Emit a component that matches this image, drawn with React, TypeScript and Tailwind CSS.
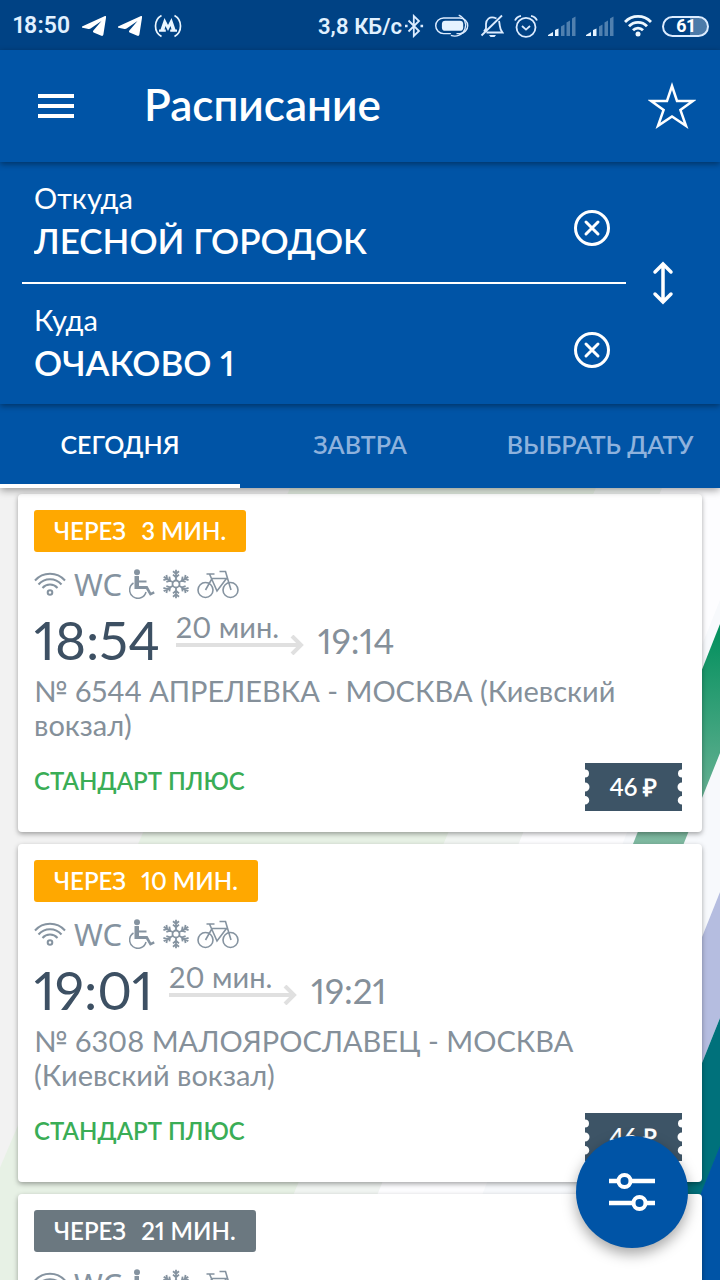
import React from "react";

type Trip = {
  eta: string;
  soon: boolean;
  depart: string;
  arrive: string;
  duration: string;
  route: string;
  fare: string;
  price: string;
};

const trips: Trip[] = [
  { eta: "3 МИН.", soon: true, depart: "18:54", arrive: "19:14", duration: "20 мин.", route: "№ 6544 АПРЕЛЕВКА - МОСКВА (Киевский вокзал)", fare: "СТАНДАРТ ПЛЮС", price: "46 ₽" },
  { eta: "10 МИН.", soon: true, depart: "19:01", arrive: "19:21", duration: "20 мин.", route: "№ 6308 МАЛОЯРОСЛАВЕЦ - МОСКВА (Киевский вокзал)", fare: "СТАНДАРТ ПЛЮС", price: "46 ₽" },
  { eta: "21 МИН.", soon: false, depart: "19:12", arrive: "19:32", duration: "20 мин.", route: "№ 6546 АПРЕЛЕВКА - МОСКВА (Киевский вокзал)", fare: "СТАНДАРТ ПЛЮС", price: "46 ₽" },
];

function Telegram() {
  return (
    <svg className="h-6 w-6" viewBox="0 0 24 24" fill="#fff">
      <path d="M0 12.500 L23 2 Q24.300 1.600 24.100 3 L21.400 20.500 Q21 22.600 18.800 21.600 L11.600 18.400 Q10.500 17.600 11.400 16.500 L19.500 7 L8.600 14.600 Q7.600 15.300 6.500 15 L0.600 13.800 Q-.6 13.300 0 12.500Z" />
    </svg>
  );
}

function Metro() {
  return (
    <svg className="h-6 w-7" viewBox="0 0 28 24" fill="none" stroke="#eaf6ff" strokeWidth="1.7">
      <path d="M7.500 1.500C-.5 6 -.5 18 7.500 22.500M20.500 1.500c8 4.500 8 16.500 0 21" />
      <path d="M10.500 4 L14 11 L17.500 4 L21.500 15.600 H23 V17.800 H16.200 V15.600 H17.500 L16.500 12 L14 17 L11.500 12 L10.500 15.600 H11.800 V17.800 H5 V15.600 H6.500Z" fill="#eaf6ff" stroke="none" />
    </svg>
  );
}

function Bluetooth() {
  return (
    <svg className="h-6 w-5" viewBox="0 0 20 24" fill="none" stroke="#dcecff" strokeWidth="1.8">
      <path d="M4.500 6.500 L15 17 L9.800 22 V2 L15 7 L4.500 17.500" />
      <path d="M1 12h2.600M16.500 12h2.600" strokeWidth="2.600" />
    </svg>
  );
}

function BatterySaver() {
  return (
    <svg className="h-6 w-9" viewBox="2 1 32 21.400" fill="none" stroke="#dcecff" strokeWidth="1.300">
      <path d="M17 18.500H10.500a7 7 0 0 1 0-14h14.500a7 7 0 0 1 0 14h-3" />
      <path d="M24 2a9.500 9.500 0 1 1-7 18" strokeWidth="1.200" />
      <rect x="9" y="7" width="19" height="9" rx="3" fill="#e6f3ff" stroke="none" />
    </svg>
  );
}

function BellOff() {
  return (
    <svg className="h-6 w-6" viewBox="0 0 24 24" fill="none" stroke="#dcecff" strokeWidth="1.800">
      <path d="M16.500 4.500C9 1 6 6.500 6 10v4.500L4 17.500M19 7c1.500 6 0 7 3.500 11.500H6.500M22 1.500 L1.500 21.500" />
      <path d="M9 21h7l-1.500 2h-4z" fill="#dcecff" stroke="none" />
    </svg>
  );
}

function Alarm() {
  return (
    <svg className="h-6 w-6" viewBox="0 0 24 24" fill="none" stroke="#dcecff" strokeWidth="1.800">
      <circle cx="12" cy="13.300" r="9.500" />
      <path d="M8 12l4 3.600 4-3.600M1 6.500C2 4 4.500 2.300 7 1.800M23 6.500C22 4 19.500 2.300 17 1.800" />
    </svg>
  );
}

function Signal() {
  return (
    <svg className="h-5 w-7" viewBox="0 0 28 20" fill="#e6f3ff">
      <path d="M0 20v-1l5-3v4zM7 14l3.500-1.500V20H7z" />
      <path d="M13 10.500l3.500-2V20H13zM18.500 6.500l3.500-2V20h-3.500zM24 2.500L27.500.5V20H24z" opacity=".35" />
    </svg>
  );
}

function StatusWifi() {
  return (
    <svg className="h-6 w-7" viewBox="0 0 28 24" fill="none" stroke="#eef8ff" strokeWidth="2.800">
      <path d="M1 8a18 18 0 0 1 26 0M5 12.200a12.500 12.500 0 0 1 18 0M9 16.200a7 7 0 0 1 10 0" />
      <circle cx="14" cy="20" r="2.500" fill="#eef8ff" stroke="none" />
    </svg>
  );
}

function StatusBar() {
  return (
    <div className="flex h-[50px] shrink-0 items-center justify-between bg-[#004284] pt-[2px] pr-[11px] pl-[13px] font-['Roboto',sans-serif] text-[#e1f1ff]">
      <div className="flex items-center gap-3 text-[23px] font-semibold">
        <span>18:50</span>
        <Telegram />
        <Telegram />
        <Metro />
      </div>
      <div className="flex items-center gap-[10px] text-[22px] font-semibold">
        <span className="-mr-2">3,8 КБ/с</span>
        <Bluetooth />
        <BatterySaver />
        <BellOff />
        <Alarm />
        <Signal />
        <Signal />
        <StatusWifi />
        <span className="flex h-[21px] w-[47px] items-center justify-center rounded-full border-2 border-[#dcecff] bg-linear-to-r from-transparent from-60% to-white/30 to-60% text-lg leading-none font-bold text-white">
          61
        </span>
      </div>
    </div>
  );
}

function ClearIcon() {
  return (
    <svg className="h-9 w-9" viewBox="0 0 36 36" fill="none" stroke="#fff" strokeWidth="3" strokeLinecap="round">
      <circle cx="18" cy="18" r="16.500" />
      <path d="M12 12l12 12M24 12L12 24" />
    </svg>
  );
}

function Station({ id, label, value }: { id: string; label: string; value: string }) {
  return (
    <div className="flex h-[120px] items-center pr-4 pl-3">
      <div className="min-w-0 flex-1 pt-1">
        <label htmlFor={id} className="block text-[29px] leading-8">{label}</label>
        <input id={id} defaultValue={value} className="block h-[52px] w-full bg-transparent text-[35px] font-semibold outline-none" />
      </div>
      <button type="button" aria-label="Очистить" className="pt-3">
        <ClearIcon />
      </button>
    </div>
  );
}

function Amenities() {
  return (
    <div className="mt-[14px] flex h-[36px] items-center text-[#8593a0]">
      <svg className="h-7 w-8" viewBox="0 0 32 28" fill="none" stroke="currentColor" strokeWidth="2">
        <path d="M1 10.500a20 20 0 0 1 30 0M4.500 14.500a15 15 0 0 1 23 0M8.500 18a10 10 0 0 1 15 0" />
        <circle cx="16" cy="22.500" r="2.300" />
      </svg>
      <span className="ml-2 w-[47px] font-['Noto_Sans',sans-serif] text-[31px]">WC</span>
      <svg className="ml-2 h-[30px] w-[26px]" viewBox="0 0 26 30" fill="none" stroke="currentColor">
        <circle cx="8" cy="3.300" r="3" fill="currentColor" stroke="none" />
        <path d="M5.500 7H10V11.500H17.500V13.500H10V17H18.500L22 23.500 24.800 22.200 25.700 24.500 21 26.800 17 20H5.500Z" fill="currentColor" stroke="none" />
        <path d="M4.500 14a8.300 8.300 0 1 0 12.500 9" strokeWidth="1.500" />
      </svg>
      <svg className="ml-2 h-[30px] w-[26px]" viewBox="0 0 26 30" fill="none" stroke="currentColor" strokeWidth="1.800">
        <circle cx="13" cy="15" r="3.500" />
        {[0, 60, 120, 180, 240, 300].map((angle) => (
          <path key={angle} transform={`rotate(${angle} 13 15)`} d="M13 11.500V.8M10 2.200L13 4.800l3-2.600M10 5.600L13 8.200 16 5.600" />
        ))}
      </svg>
      <svg className="ml-2 h-[30px] w-[42px]" viewBox="0 0 42 30" fill="none" stroke="currentColor" strokeWidth="1.600">
        <circle cx="8.500" cy="21" r="7.500" />
        <circle cx="33.500" cy="21" r="7.500" />
        <path d="M8.500 21L15 9.500h14.500L20 22 12.500 5M9.500 5h8M22.500 2.500h6L34 21" />
      </svg>
    </div>
  );
}

function Ticket({ price }: { price: string }) {
  return (
    <button type="button" className="relative h-12 w-[97px] text-2xl font-semibold text-white">
      <svg className="absolute inset-0 h-full w-full" viewBox="0 0 97 48" fill="#3d5466">
        <path d="M0 0H97V6.500A4 4 0 0 0 97 14.500V19.500A4 4 0 0 0 97 28.500V33A4 4 0 0 0 97 41.500V48H0V41.500A4 4 0 0 0 0 33V28.500A4 4 0 0 0 0 19.500V14.500A4 4 0 0 0 0 6.500Z" />
      </svg>
      <span className="relative">{price}</span>
    </button>
  );
}

function TripCard({ trip }: { trip: Trip }) {
  return (
    <article className="rounded-[4px] bg-white px-4 pt-4 pb-[21px] shadow-[0_2px_5px_rgba(0,0,0,0.35)]">
      <span className={`inline-flex h-[42px] items-center gap-[15px] rounded-[3px] px-5 align-top text-2xl font-semibold text-white ${trip.soon ? "bg-[#ffa800]" : "bg-[#6b7880]"}`}>
        <span>ЧЕРЕЗ</span>
        <span>{trip.eta}</span>
      </span>
      <Amenities />
      <div className="mt-2 flex h-[60px] items-center">
        <time className="text-[53px] leading-[60px] text-[#3d5063]">{trip.depart}</time>
        <div className="ml-4 flex w-[128px] flex-col pb-3">
          <span className="text-[29px] leading-7 text-[#85909a]">{trip.duration}</span>
          <svg className="-mt-[6px] h-5 w-32" viewBox="0 0 128 20" fill="none" stroke="#e0e0e0" strokeWidth="4">
            <path d="M0 10h125M116 1l9 9-9 9" />
          </svg>
        </div>
        <time className="ml-[14px] text-[35px] text-[#85909a]">{trip.arrive}</time>
      </div>
      <p className="mt-1 text-[29px] leading-[34px] text-[#85909a]">{trip.route}</p>
      <div className="mt-[21px] flex items-start justify-between pr-1">
        <span className="text-2xl leading-9 font-semibold text-[#3aad56]">{trip.fare}</span>
        <Ticket price={trip.price} />
      </div>
    </article>
  );
}

function Backdrop() {
  return (
    <svg className="absolute inset-0 h-full w-full" viewBox="0 0 720 792" preserveAspectRatio="xMaxYMin slice">
      <defs>
        <linearGradient id="green" x1="0" y1="0" x2="0" y2="1">
          <stop offset="0" stopColor="#008f5c" />
          <stop offset=".6" stopColor="#7db89f" />
          <stop offset="1" stopColor="#a8d4c2" />
        </linearGradient>
      </defs>
      <path fill="#f2f2f2" d="M0 0H720V792H0z" />
      <path fill="#e7f1e5" d="M290 0H596L257 792H-48z" />
      <path fill="#f1f5f2" d="M596 0H662L343 792H257z" />
      <path fill="#fdfdff" d="M662 0H720V792H343z" />
      <path fill="#f7f9fc" d="M720 112V404L565 792H448z" />
      <path fill="url(#green)" d="M720 136V265L630 490H580z" />
      <path fill="#b5bde0" d="M720 404V530L615 792H565z" />
      <path fill="#00717b" d="M720 530V660L667 792H615z" />
      <path fill="#0054a6" d="M720 658V792H666z" />
    </svg>
  );
}

const tabs = ["СЕГОДНЯ", "ЗАВТРА", "ВЫБРАТЬ ДАТУ"];

export default function App() {
  return (
    <div className="flex h-screen flex-col overflow-hidden bg-[#f2f2f2] font-['Lato',sans-serif] proportional-nums">
      <StatusBar />
      <header className="z-30 flex h-28 shrink-0 items-center bg-[#0054a6] pr-6 pl-[38px] text-white shadow-[0_2px_6px_rgba(0,0,0,0.4)]">
        <button type="button" aria-label="Меню" className="flex w-9 flex-col gap-[6px]">
          <span className="h-1 bg-white" />
          <span className="h-1 bg-white" />
          <span className="h-1 bg-white" />
        </button>
        <h1 className="ml-[70px] flex-1 pb-1 text-[44px] font-semibold">Расписание</h1>
        <button type="button" aria-label="В избранное">
          <svg className="h-12 w-12" viewBox="0 0 48 48" fill="none" stroke="#fff" strokeWidth="2.500">
            <path d="M24 4L29 19H44.800L32.400 28 38 43.800 24 34.400 10 43.800 15.600 28 3.200 19H19Z" />
          </svg>
        </button>
      </header>
      <section className="z-20 flex shrink-0 items-center bg-[#0054a6] pl-[22px] text-white shadow-[0_2px_6px_rgba(0,0,0,0.4)]">
        <div className="flex-1">
          <Station id="from" label="Откуда" value="ЛЕСНОЙ ГОРОДОК" />
          <hr className="border-t-2 border-white" />
          <Station id="to" label="Куда" value="ОЧАКОВО 1" />
        </div>
        <button type="button" aria-label="Поменять местами" className="flex w-[94px] justify-center pr-5">
          <svg className="h-11 w-6" viewBox="0 0 24 44" fill="none" stroke="#fff" strokeWidth="3.500" strokeLinecap="round">
            <path d="M12 3v38M4 11l8-8 8 8M4 33l8 8 8-8" />
          </svg>
        </button>
      </section>
      <nav className="z-10 grid h-[84px] shrink-0 grid-cols-3 bg-[#0054a6] shadow-[0_2px_8px_rgba(0,0,0,0.4)]">
        {tabs.map((tab, i) => (
          <button key={tab} type="button" className={`border-b-4 pt-[2px] text-[25px] font-semibold whitespace-nowrap ${i === 0 ? "border-white text-white" : "border-transparent text-[#8eb2dd]"}`}>
            {tab}
          </button>
        ))}
      </nav>
      <main className="relative min-h-0 flex-1 overflow-hidden">
        <Backdrop />
        <div className="relative flex flex-col gap-3 px-[18px] pt-[6px]">
          {trips.map((trip) => (
            <TripCard key={trip.depart} trip={trip} />
          ))}
        </div>
        <button type="button" aria-label="Фильтры" className="absolute right-8 bottom-8 flex h-28 w-28 items-center justify-center rounded-full bg-[#0054a6] shadow-[0_6px_14px_rgba(0,0,0,0.35)]">
          <svg className="h-10 w-[46px]" viewBox="0 0 46 40" fill="#0054a6" stroke="#fff" strokeWidth="4.500">
            <path d="M0 9h46M0 31h46" />
            <circle cx="15.500" cy="9" r="6" strokeWidth="4" />
            <circle cx="30.500" cy="31" r="6" strokeWidth="4" />
          </svg>
        </button>
      </main>
    </div>
  );
}
